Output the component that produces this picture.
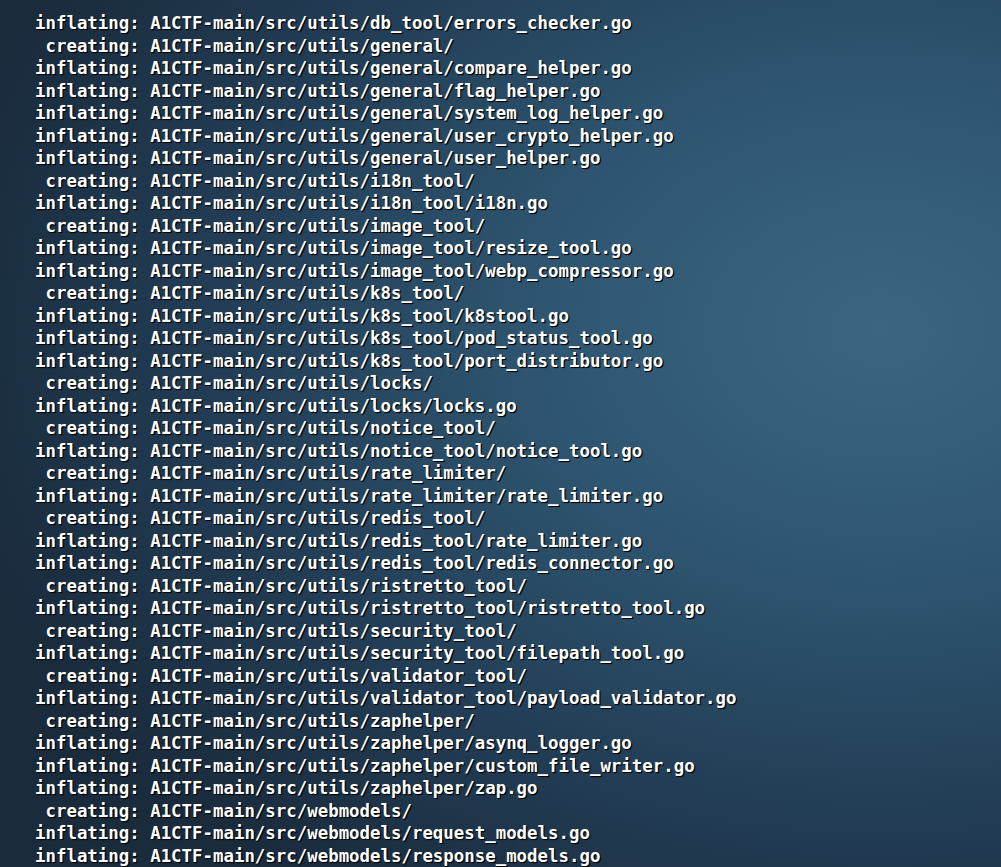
const lines: string[] = [
  'inflating: A1CTF-main/src/utils/db_tool/errors_checker.go',
  ' creating: A1CTF-main/src/utils/general/',
  'inflating: A1CTF-main/src/utils/general/compare_helper.go',
  'inflating: A1CTF-main/src/utils/general/flag_helper.go',
  'inflating: A1CTF-main/src/utils/general/system_log_helper.go',
  'inflating: A1CTF-main/src/utils/general/user_crypto_helper.go',
  'inflating: A1CTF-main/src/utils/general/user_helper.go',
  ' creating: A1CTF-main/src/utils/i18n_tool/',
  'inflating: A1CTF-main/src/utils/i18n_tool/i18n.go',
  ' creating: A1CTF-main/src/utils/image_tool/',
  'inflating: A1CTF-main/src/utils/image_tool/resize_tool.go',
  'inflating: A1CTF-main/src/utils/image_tool/webp_compressor.go',
  ' creating: A1CTF-main/src/utils/k8s_tool/',
  'inflating: A1CTF-main/src/utils/k8s_tool/k8stool.go',
  'inflating: A1CTF-main/src/utils/k8s_tool/pod_status_tool.go',
  'inflating: A1CTF-main/src/utils/k8s_tool/port_distributor.go',
  ' creating: A1CTF-main/src/utils/locks/',
  'inflating: A1CTF-main/src/utils/locks/locks.go',
  ' creating: A1CTF-main/src/utils/notice_tool/',
  'inflating: A1CTF-main/src/utils/notice_tool/notice_tool.go',
  ' creating: A1CTF-main/src/utils/rate_limiter/',
  'inflating: A1CTF-main/src/utils/rate_limiter/rate_limiter.go',
  ' creating: A1CTF-main/src/utils/redis_tool/',
  'inflating: A1CTF-main/src/utils/redis_tool/rate_limiter.go',
  'inflating: A1CTF-main/src/utils/redis_tool/redis_connector.go',
  ' creating: A1CTF-main/src/utils/ristretto_tool/',
  'inflating: A1CTF-main/src/utils/ristretto_tool/ristretto_tool.go',
  ' creating: A1CTF-main/src/utils/security_tool/',
  'inflating: A1CTF-main/src/utils/security_tool/filepath_tool.go',
  ' creating: A1CTF-main/src/utils/validator_tool/',
  'inflating: A1CTF-main/src/utils/validator_tool/payload_validator.go',
  ' creating: A1CTF-main/src/utils/zaphelper/',
  'inflating: A1CTF-main/src/utils/zaphelper/asynq_logger.go',
  'inflating: A1CTF-main/src/utils/zaphelper/custom_file_writer.go',
  'inflating: A1CTF-main/src/utils/zaphelper/zap.go',
  ' creating: A1CTF-main/src/webmodels/',
  'inflating: A1CTF-main/src/webmodels/request_models.go',
  'inflating: A1CTF-main/src/webmodels/response_models.go',
];

export default function App() {
  return (
    <div className="h-[867px] w-full overflow-hidden bg-[radial-gradient(ellipse_95%_80%_at_88%_38%,#3a6682_0%,#2f5671_35%,#223d55_70%,#1a2b3c_100%)]">
      <div className="pl-[35px] pt-[12px] font-['DejaVu_Sans_Mono',monospace] text-[17.4px] font-bold leading-[22.5px] text-white whitespace-pre [text-shadow:1px_1px_1px_#000,1px_1px_0_#05101f]">
        {lines.map((line, i) => (
          <div key={i}>{line}</div>
        ))}
        <div>
          {'                     '}
          <span className="inline-block h-[22.5px] w-[10.5px] bg-[#22c55e] align-top" />
        </div>
      </div>
    </div>
  );
}
